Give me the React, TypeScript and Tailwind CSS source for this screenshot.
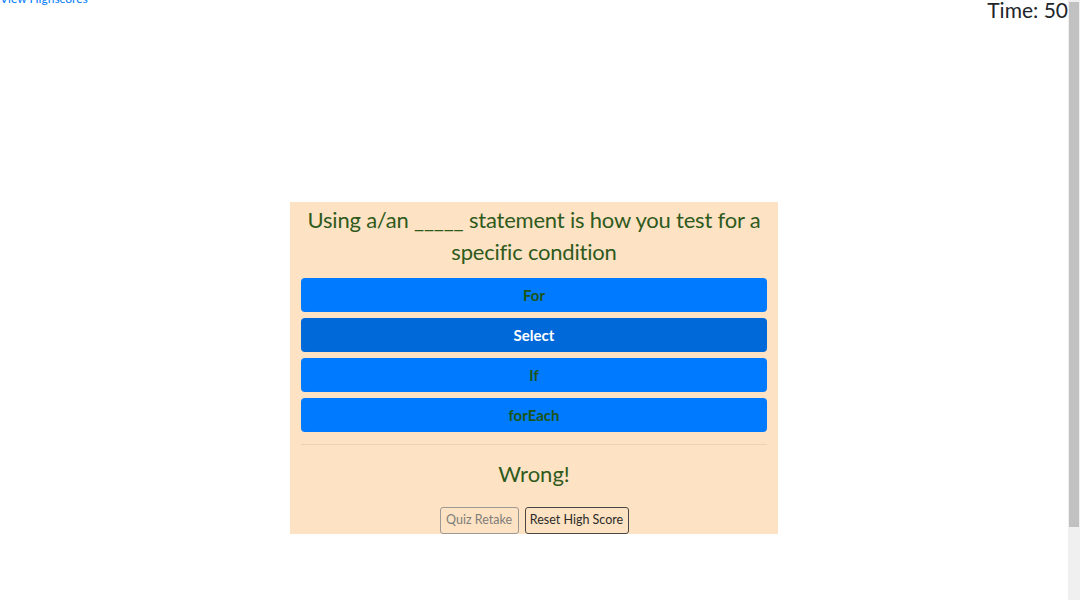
import React from "react";

const font = { fontFamily: 'Lato, "Noto Sans", sans-serif' };

export default function App() {
  const answers = [
    { t: "For", active: false },
    { t: "Select", active: true },
    { t: "If", active: false },
    { t: "forEach", active: false },
  ];
  return (
    <div className="h-[600px] overflow-hidden bg-white flex" style={font}>
      <div className="flex-1 flex flex-col">
        <div className="flex justify-between items-start">
          <a className="text-[12px] leading-[18px] text-[#007bff] -mt-[10px]">View Highscores</a>
          <div className="text-[21px] leading-[24px] text-[#212529] -mt-[2px]">Time: 50</div>
        </div>
        <div className="flex justify-center mt-[180px]">
          <div className="w-[488px] bg-[#fde3c4] px-[11px] pt-[2px] flex flex-col items-stretch">
            <h2 className="text-[22px] tracking-[-0.2px] leading-[32px] text-center text-[#2f5a1c] font-normal">
              Using a/an _____ statement is how you test for a specific condition
            </h2>
            <div className="flex flex-col gap-[6px] mt-[10px]">
              {answers.map((a) => (
                <button
                  key={a.t}
                  className={
                    "h-[34px] rounded-[4px] text-[15px] font-bold flex items-center justify-center " +
                    (a.active ? "bg-[#0069d9] text-white" : "bg-[#007bff] text-[#1c5518]")
                  }
                >
                  {a.t}
                </button>
              ))}
            </div>
            <div className="h-px bg-[#ead2b4] mt-[12px]" />
            <div className="text-[22px] leading-[32px] text-center text-[#2f5a1c] mt-[13px]">Wrong!</div>
            <div className="flex justify-center gap-[6px] mt-[17px]">
              <button className="h-[27px] w-[79px] rounded-[3px] border border-[#9d9a96] text-[#7f7c78] text-[12.5px] bg-transparent">
                Quiz Retake
              </button>
              <button className="h-[27px] w-[104px] rounded-[3px] border border-[#4a4845] text-[#2b2a28] text-[12.5px] bg-transparent">
                Reset High Score
              </button>
            </div>
          </div>
        </div>
      </div>
      <div className="w-[12px] bg-[#f0f0f0] pl-[1px] pr-[1px] pt-[2px]">
        <div className="h-[525px] bg-[#c1c1c1]" />
      </div>
    </div>
  );
}
